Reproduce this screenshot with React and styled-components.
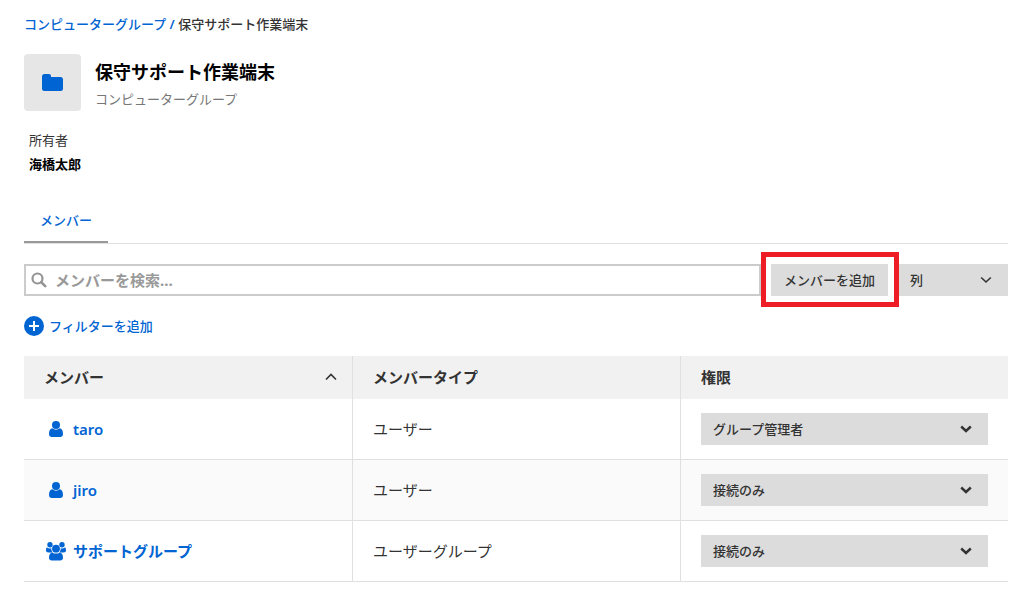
import React, { useState } from 'react';
import styled, { createGlobalStyle } from 'styled-components';

const colors = {
  link: '#0064d2',
  text: '#333333',
  muted: '#777777',
  button: '#dcdcdc',
  line: '#e0e0e0',
  head: '#f1f1f1',
};

const GlobalStyle = createGlobalStyle`
  * {
    box-sizing: border-box;
  }

  body {
    margin: 0;
    background: #ffffff;
    color: ${colors.text};
    font-family: "Noto Sans", "Noto Sans CJK JP", sans-serif;
    font-size: 13px;
    line-height: 20px;
  }

  button, input, select {
    font: inherit;
    color: inherit;
    border: 0;
    border-radius: 0;
    margin: 0;
  }
`;

const Page = styled.main`
  padding: 14px 28px 18px 24px;
`;

const Link = styled.a`
  color: ${colors.link};
  font-weight: ${props => props.$weight || 500};
  text-decoration: none;
`;

const Breadcrumb = styled.nav`
  color: ${colors.text};
  font-weight: 500;
`;

const Slash = styled.span`
  color: ${colors.link};
  font-weight: 600;
`;

const Header = styled.header`
  display: flex;
  gap: 14px;
  margin-top: 20px;
`;

const FolderTile = styled.div`
  display: flex;
  align-items: center;
  justify-content: center;
  width: 57px;
  height: 57px;
  border-radius: 4px;
  background: #e6e6e6;
  color: ${colors.link};
`;

const Title = styled.h1`
  margin: 6px 0 5px;
  color: #000000;
  font-size: 18px;
  font-weight: 700;
  line-height: 24px;
`;

const Subtitle = styled.p`
  margin: 0;
  color: ${colors.muted};
`;

const Owner = styled.dl`
  margin: 19px 0 0 5px;
`;

const OwnerLabel = styled.dt`
  margin-bottom: 4px;
`;

const OwnerName = styled.dd`
  margin: 0;
  color: #000000;
  font-weight: 700;
`;

const Tabs = styled.div`
  display: flex;
  margin-top: 26px;
  border-bottom: 1px solid ${colors.line};
`;

const Tab = styled.button`
  padding: 10px 16px;
  border-bottom: 2px solid #999999;
  background: none;
  color: ${colors.link};
  font-weight: 500;
  line-height: 21px;
`;

const Toolbar = styled.div`
  display: flex;
  gap: 10px;
  height: 32px;
  margin-top: 20px;
`;

const SearchBox = styled.label`
  display: flex;
  flex: 1;
  align-items: center;
  gap: 8px;
  padding-left: 5px;
  border: 2px solid #cccccc;
  color: #949494;
`;

const SearchInput = styled.input`
  flex: 1;
  min-width: 0;
  padding: 0;
  background: none;
  color: ${colors.text};
  font-size: 15px;
  font-weight: 700;
  outline: none;

  &::placeholder {
    color: #999999;
    opacity: 1;
  }
`;

const AddMember = styled.button`
  position: relative;
  padding: 0 13px;
  background: ${colors.button};
  font-weight: 500;

  /* callout frame */
  &::after {
    content: "";
    position: absolute;
    inset: -12px -11px -11px -10px;
    border: 5px solid #ee1c25;
    pointer-events: none;
  }
`;

const SelectWrap = styled.div`
  display: grid;
  align-items: center;
  width: ${props => props.$width || '100%'};
  height: 32px;
  background: ${colors.button};

  > * {
    grid-area: 1 / 1;
  }

  > svg {
    justify-self: end;
    margin-right: 16px;
    pointer-events: none;
  }
`;

const SelectField = styled.select`
  width: 100%;
  height: 100%;
  padding: 0 36px 0 12px;
  appearance: none;
  background: none;
  font-size: 13px;
  font-weight: 500;
`;

const FilterButton = styled.button`
  display: flex;
  align-items: center;
  gap: 5px;
  margin: 20px 0;
  padding: 0;
  background: none;
  color: ${colors.link};
  font-weight: 500;
`;

const Table = styled.table`
  width: 100%;
  border-spacing: 0;
  table-layout: fixed;
  font-size: 15px;
`;

const HeadCell = styled.th`
  height: 43px;
  padding: 0 15px 2px 20px;
  background: ${colors.head};
  font-weight: 700;
  text-align: left;

  & + & {
    border-left: 1px solid ${colors.line};
  }
`;

const HeadContent = styled.div`
  display: flex;
  align-items: center;
  justify-content: space-between;
`;

const Row = styled.tr`
  &:nth-child(even) {
    background: #fafafa;
  }
`;

const Cell = styled.td`
  height: 61px;
  padding: 0 20px;
  border-bottom: 1px solid ${colors.line};

  & + & {
    border-left: 1px solid ${colors.line};
  }
`;

const Member = styled.div`
  display: flex;
  align-items: center;
  gap: 5px;
`;

const IconSlot = styled.span`
  display: flex;
  justify-content: center;
  width: 24px;
  color: ${colors.link};
`;

const Chevron = ({ up, weight = 1.6 }) => (
  <svg width="12" height="8" viewBox="0 0 12 8" fill="none" stroke="#333333" strokeWidth={weight} aria-hidden="true">
    <path d={up ? 'M1 6.500 6 1.500l5 5' : 'M1.200 1.500 6 6l4.800-4.500'} />
  </svg>
);

const FolderIcon = () => (
  <svg width="21" height="17" viewBox="0 0 21 17" fill="currentColor" aria-hidden="true">
    <path d="M2.500 0h4.500a2 2 0 0 1 2 2v1h9.500A2.500 2.500 0 0 1 21 5.500v9a2.500 2.500 0 0 1-2.500 2.500h-16A2.500 2.500 0 0 1 0 14.500v-12A2.500 2.500 0 0 1 2.500 0Z" />
  </svg>
);

const SearchIcon = () => (
  <svg width="16" height="16" viewBox="0 0 16 16" fill="none" stroke="currentColor" aria-hidden="true">
    <circle cx="6.500" cy="6.500" r="5" strokeWidth="2.200" />
    <path d="m10.200 10.200 4 4" strokeWidth="2.600" strokeLinecap="round" />
  </svg>
);

const PlusIcon = () => (
  <svg width="20" height="20" viewBox="0 0 20 20" aria-hidden="true">
    <circle cx="10" cy="10" r="10" fill={colors.link} />
    <path d="M10 5v10M5 10h10" stroke="#ffffff" strokeWidth="2" />
  </svg>
);

const UserIcon = () => (
  <svg width="14" height="16" viewBox="0 0 14 16" fill="currentColor" aria-hidden="true">
    <circle cx="7" cy="4" r="4" />
    <path d="M3.400 7.200C1 7.600 0 9.800 0 13c0 1.900 1.100 3 2.800 3h8.400c1.700 0 2.800-1.100 2.800-3 0-3.200-1-5.400-3.400-5.800A5.300 5.300 0 0 1 7 8.700a5.300 5.300 0 0 1-3.600-1.500Z" />
  </svg>
);

const GroupIcon = () => (
  <svg width="20" height="19" viewBox="0 0 20 19" fill="currentColor" aria-hidden="true">
    <circle cx="4" cy="2.700" r="2.700" />
    <circle cx="16" cy="2.700" r="2.700" />
    <circle cx="10" cy="6.700" r="3.900" />
    <path d="M1.200 5.400A4 4 0 0 0 4 6.500c.5 0 1-.1 1.400-.2-.2 1.700.2 3 1.100 4.200H2.300C.9 10.500 0 9.900 0 8.600 0 7.300.1 5.400 1.200 5.400Z" />
    <path d="M18.800 5.400A4 4 0 0 1 16 6.500c-.5 0-1-.1-1.400-.2.200 1.700-.2 3-1.100 4.200h4.200c1.400 0 2.300-.6 2.300-1.900 0-1.300-.1-3.200-1.200-3.200Z" />
    <path d="M6.300 10.400C4 10.800 3 12.600 3 15.800 3 17.700 4.100 18.500 5.800 18.500h8.400c1.700 0 2.800-.8 2.800-2.700 0-3.200-1-5-3.300-5.400A5.600 5.600 0 0 1 10 11.600a5.600 5.600 0 0 1-3.700-1.200Z" />
  </svg>
);

const roles = ['グループ管理者', '接続のみ'];

const members = [
  { name: 'taro', type: 'ユーザー', role: 'グループ管理者' },
  { name: 'jiro', type: 'ユーザー', role: '接続のみ' },
  { name: 'サポートグループ', type: 'ユーザーグループ', role: '接続のみ', group: true },
];

const MemberRow = ({ member }) => {
  const [role, setRole] = useState(member.role);

  return (
    <Row>
      <Cell>
        <Member>
          <IconSlot>{member.group ? <GroupIcon /> : <UserIcon />}</IconSlot>
          <Link href="#member" $weight={member.group ? 700 : 600}>{member.name}</Link>
        </Member>
      </Cell>
      <Cell>{member.type}</Cell>
      <Cell>
        <SelectWrap>
          <SelectField
            aria-label={`${member.name} 権限`}
            value={role}
            onChange={e => setRole(e.target.value)}
          >
            {roles.map(r => <option key={r}>{r}</option>)}
          </SelectField>
          <Chevron weight={2.4} />
        </SelectWrap>
      </Cell>
    </Row>
  );
};

const App = () => {
  const [query, setQuery] = useState('');

  return (
    <>
      <GlobalStyle />
      <Page>
        <Breadcrumb>
          <Link href="#groups">コンピューターグループ</Link>
          <Slash> / </Slash>
          保守サポート作業端末
        </Breadcrumb>
        <Header>
          <FolderTile><FolderIcon /></FolderTile>
          <div>
            <Title>保守サポート作業端末</Title>
            <Subtitle>コンピューターグループ</Subtitle>
          </div>
        </Header>
        <Owner>
          <OwnerLabel>所有者</OwnerLabel>
          <OwnerName>海橋太郎</OwnerName>
        </Owner>
        <Tabs role="tablist">
          <Tab role="tab" aria-selected="true">メンバー</Tab>
        </Tabs>
        <Toolbar>
          <SearchBox>
            <SearchIcon />
            <SearchInput
              aria-label="メンバーを検索"
              placeholder="メンバーを検索..."
              value={query}
              onChange={e => setQuery(e.target.value)}
            />
          </SearchBox>
          <AddMember>メンバーを追加</AddMember>
          <SelectWrap $width="110px">
            <SelectField aria-label="列">
              <option>列</option>
            </SelectField>
            <Chevron />
          </SelectWrap>
        </Toolbar>
        <FilterButton><PlusIcon />フィルターを追加</FilterButton>
        <Table>
          <thead>
            <tr>
              <HeadCell aria-sort="ascending">
                <HeadContent>メンバー<Chevron up /></HeadContent>
              </HeadCell>
              <HeadCell>メンバータイプ</HeadCell>
              <HeadCell>権限</HeadCell>
            </tr>
          </thead>
          <tbody>
            {members.map(m => <MemberRow key={m.name} member={m} />)}
          </tbody>
        </Table>
      </Page>
    </>
  );
};

export default App;
